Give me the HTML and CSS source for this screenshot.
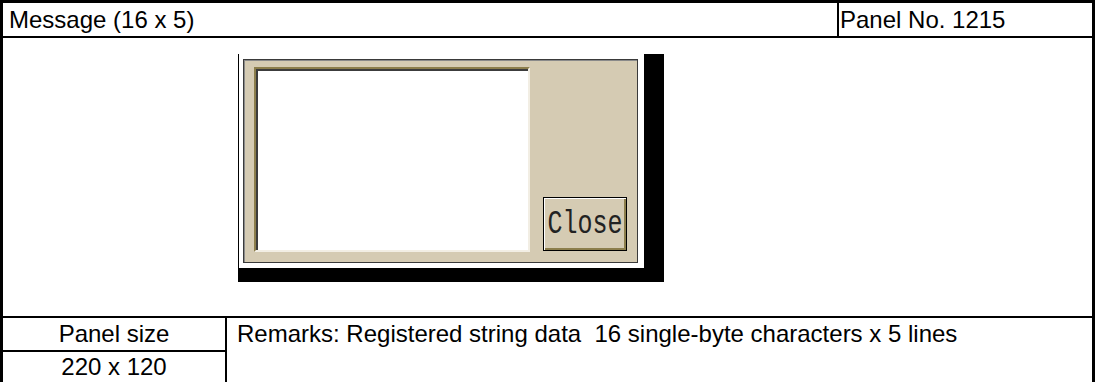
FILE: index.html
```html
<!DOCTYPE html>
<html>
<head>
<meta charset="utf-8">
<link rel="stylesheet" href="styles.css">
</head>
<body>
<div class="sheet">
  <div class="head">
    <div class="title">Message (16 x 5)</div>
    <div class="panelno">Panel No. 1215</div>
  </div>
  <div class="preview">
    <div class="window">
      <div class="screen">
        <div class="dialog">
          <div class="textarea"></div>
          <div class="btn"><span class="btn-label">Close</span></div>
        </div>
      </div>
    </div>
  </div>
  <div class="foot">
    <div class="sizecol">
      <div class="sizehead">Panel size</div>
      <div class="sizeval">220 x 120</div>
    </div>
    <div class="remarks">Remarks: Registered string data&nbsp; 16 single-byte characters x 5 lines</div>
  </div>
</div>
</body>
</html>
```
FILE: styles.css
```css
html, body {
  margin: 0;
  padding: 0;
  background: #fff;
}
body {
  font-family: "Liberation Sans", Arial, sans-serif;
  font-size: 24px;
  color: #000;
}
.sheet {
  width: 1095px;
  height: 382px;
  box-sizing: border-box;
  border-top: 3px solid #000;
  border-left: 3px solid #000;
  border-right: 3px solid #000;
  display: flex;
  flex-direction: column;
  overflow: hidden;
}
.head {
  display: flex;
  height: 35px;
  box-sizing: border-box;
  border-bottom: 2px solid #000;
}
.title {
  width: 836px;
  box-sizing: border-box;
  border-right: 2px solid #000;
  padding-left: 6px;
  line-height: 34px;
  white-space: nowrap;
}
.panelno {
  flex: 1;
  padding-left: 1px;
  line-height: 34px;
  white-space: nowrap;
}
.preview {
  height: 281px;
  box-sizing: border-box;
  border-bottom: 2px solid #000;
  padding: 16px 0 0 235px;
}
.window {
  width: 426px;
  height: 228px;
  box-sizing: border-box;
  background: #000;
  padding: 0 20px 14px 1px;
}
.screen {
  height: 100%;
  box-sizing: border-box;
  background: #fff;
  padding: 5px 0 0 4px;
}
.dialog {
  width: 395px;
  height: 204px;
  box-sizing: border-box;
  border: 1px solid #3a3a3a;
  box-shadow: inset 1px 1px 0 #8a8a8a;
  background: #d5cbb3;
  padding: 7px 10px 10px 10px;
  display: flex;
}
.textarea {
  width: 276px;
  height: 185px;
  box-sizing: border-box;
  background: #fff;
  border-style: solid;
  border-width: 2px;
  border-color: #8c7e4c #f2eee4 #f2eee4 #8c7e4c;
  box-shadow: inset 2px 2px 0 #3c3c3c;
}
.btn {
  align-self: flex-end;
  margin-left: auto;
  margin-bottom: 1px;
  width: 84px;
  height: 54px;
  box-sizing: border-box;
  border: 1px solid #000;
  box-shadow: inset 1px 1px 0 #fff, inset -2px -2px 0 #8c7e4c;
  display: flex;
  align-items: center;
  justify-content: center;
}
.btn-label {
  font-family: "Liberation Mono", "Courier New", monospace;
  font-size: 25px;
  line-height: 1;
  color: #222;
  display: inline-block;
  transform: scaleY(1.3);
}
.foot {
  flex: 1;
  display: flex;
}
.sizecol {
  width: 224px;
  box-sizing: border-box;
  border-right: 2px solid #000;
  display: flex;
  flex-direction: column;
}
.sizehead {
  height: 34px;
  box-sizing: border-box;
  border-bottom: 2px solid #000;
  text-align: center;
  line-height: 32px;
}
.sizeval {
  flex: 1;
  text-align: center;
  line-height: 30px;
}
.remarks {
  flex: 1;
  padding-left: 10px;
  line-height: 32px;
  white-space: nowrap;
}
```
